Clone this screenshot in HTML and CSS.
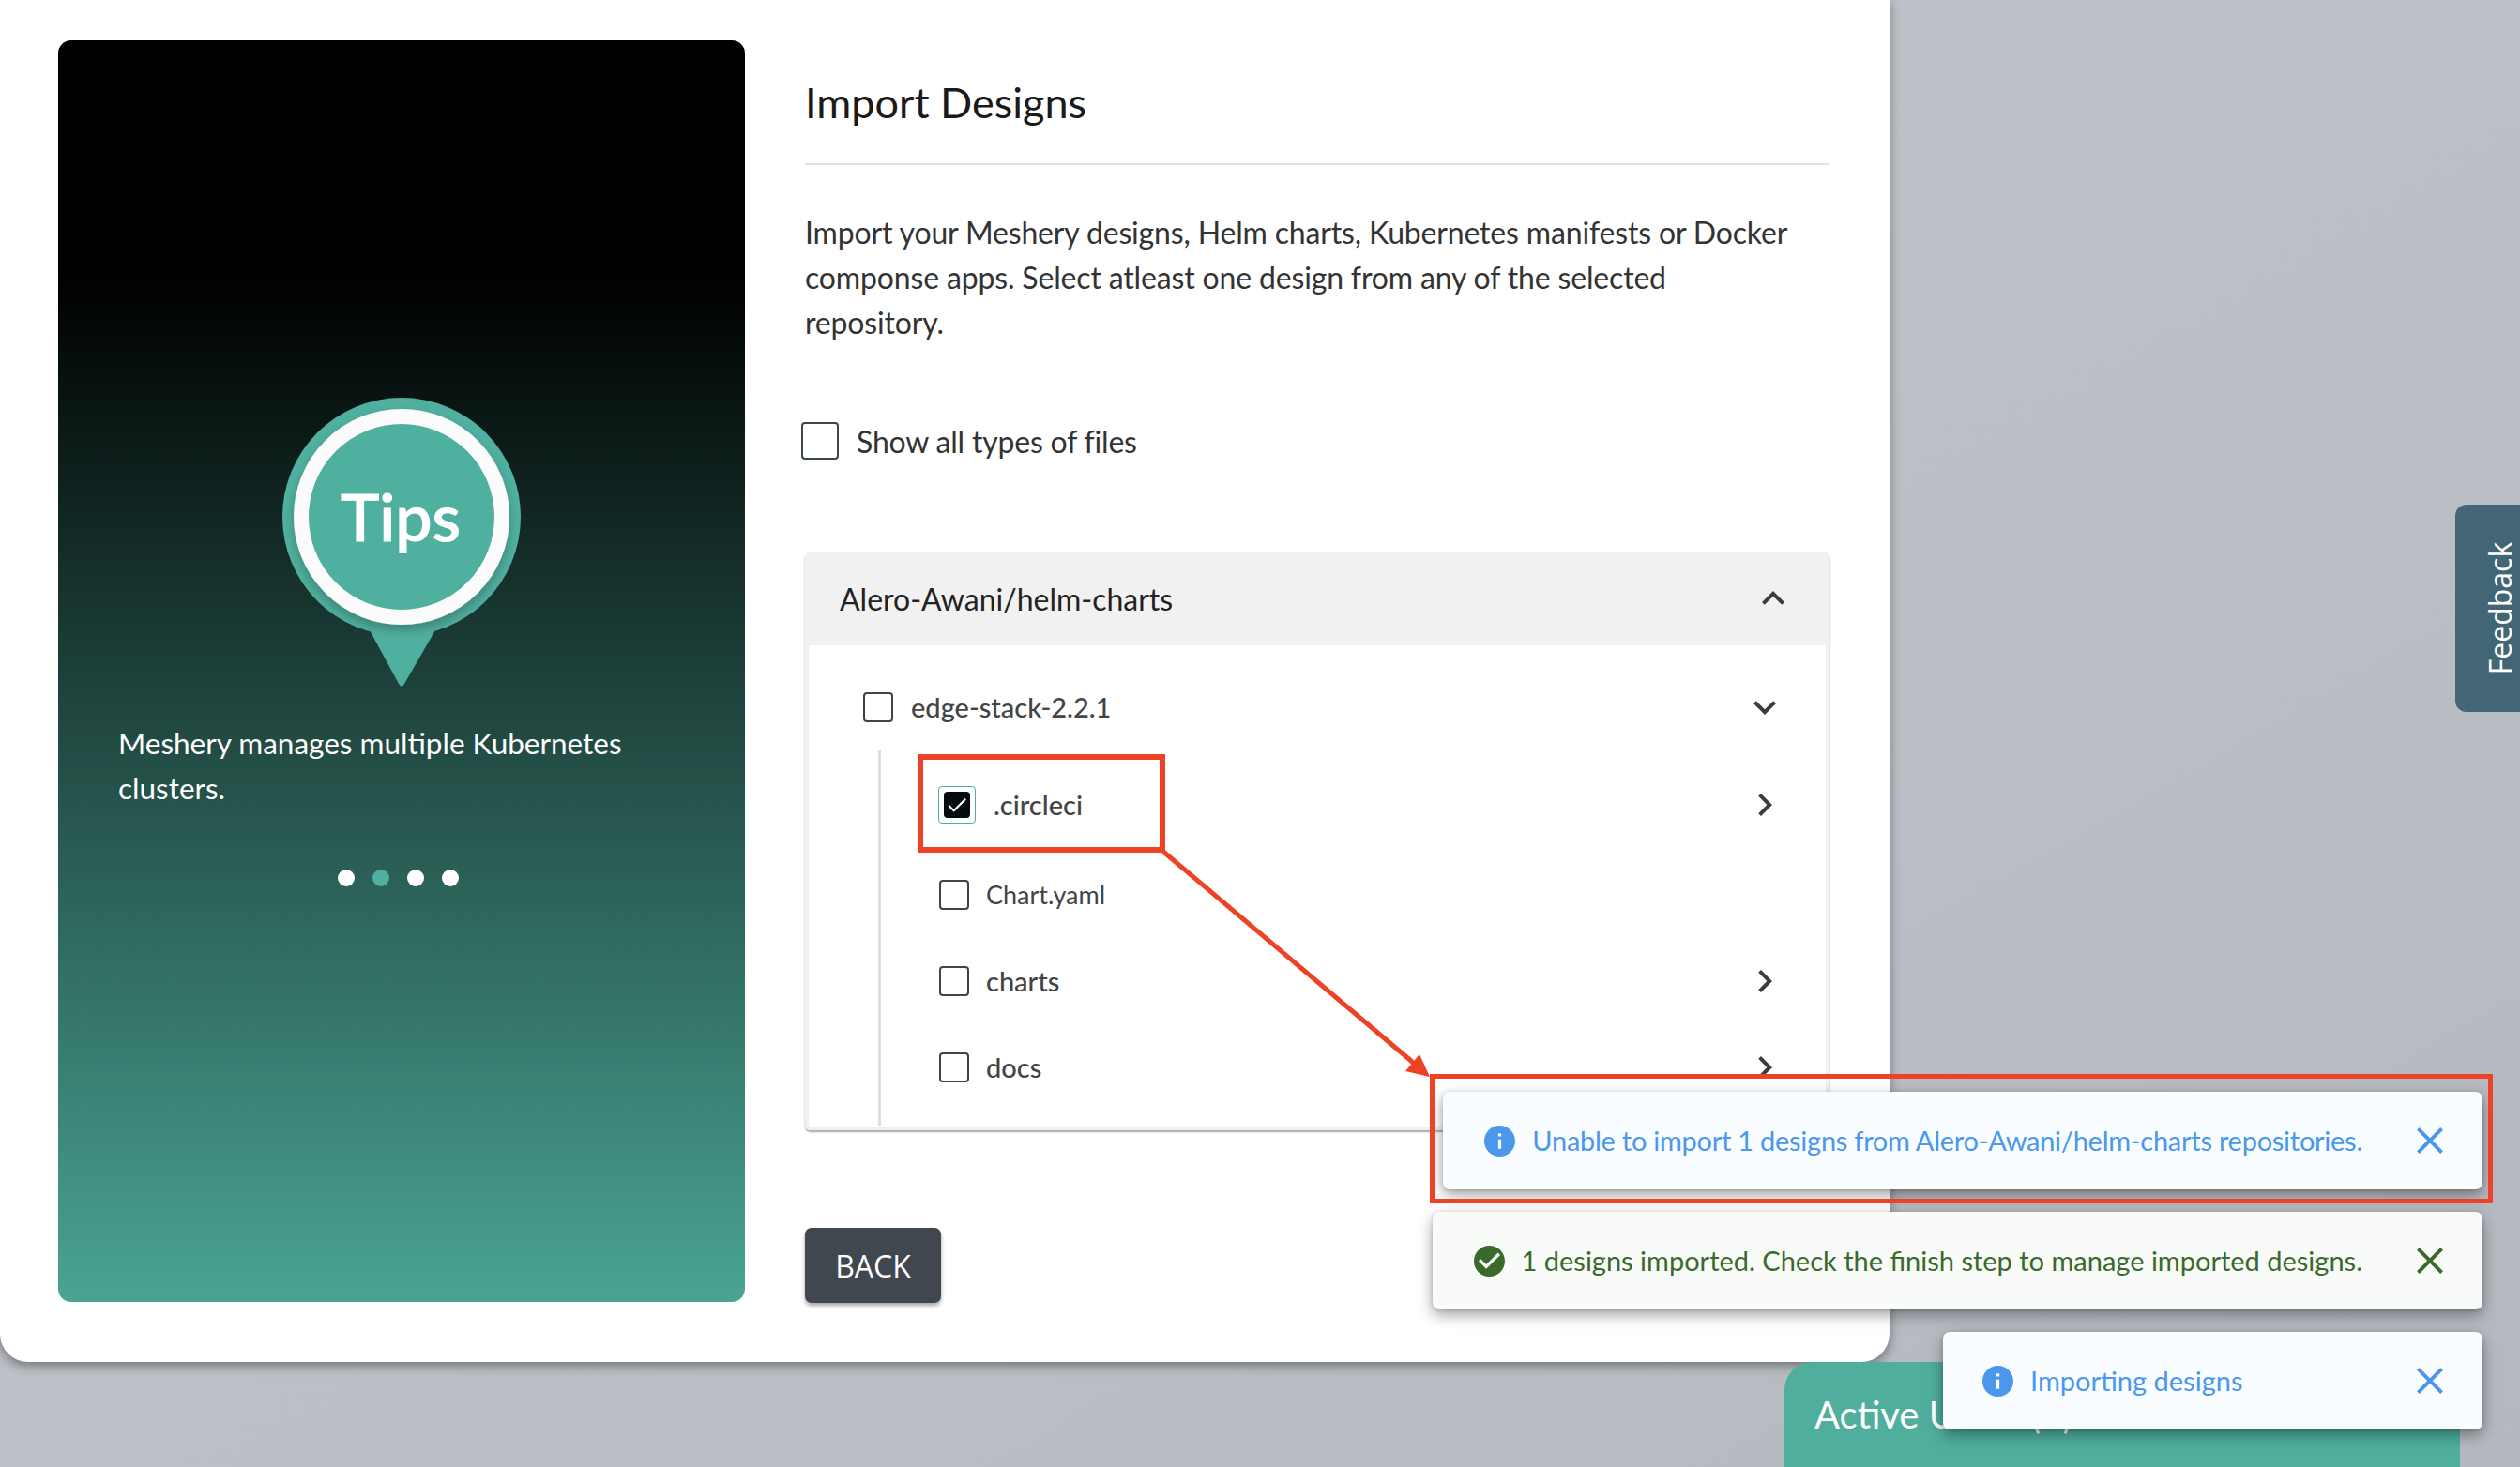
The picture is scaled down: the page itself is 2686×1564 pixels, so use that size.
FILE: index.html
```html
<!DOCTYPE html>
<html lang="en">
<head>
<meta charset="utf-8">
<title>Import Designs</title>
<link rel="stylesheet" href="styles.css">
</head>
<body>
<main class="modal">
  <aside class="tips">
    <svg class="pin" viewBox="0 0 254 310" width="254" height="310">
      <defs><filter id="ringShadow" x="-20%" y="-20%" width="140%" height="140%"><feDropShadow dx="0" dy="6" stdDeviation="6" flood-color="#000" flood-opacity=".25"/></filter></defs>
      <circle cx="127" cy="127" r="127" fill="#50b09f"/>
      <path d="M92 246 L164 246 L130 305 Q127 310 124 305 Z" fill="#50b09f"/>
      <circle cx="127" cy="127" r="107" fill="#50b09f" stroke="#fbfbfb" stroke-width="16" filter="url(#ringShadow)"/>
      <text class="pin-text" x="126" y="153" text-anchor="middle">Tips</text>
    </svg>
    <p class="tip-copy">Meshery manages multiple Kubernetes clusters.</p>
    <div class="dots"><span class="dot"></span><span class="dot dot-on"></span><span class="dot"></span><span class="dot"></span></div>
  </aside>
  <section class="content">
    <h1 class="title">Import Designs</h1>
    <p class="intro">Import your Meshery designs, Helm charts, Kubernetes manifests or Docker componse apps. Select atleast one design from any of the selected repository.</p>
    <label class="show-all"><span class="box box-lg"></span><span>Show all types of files</span></label>
    <div class="accordion">
      <div class="acc-head">
        <span>Alero-Awani/helm-charts</span>
        <svg class="chev chev-head" viewBox="0 0 24 24"><path d="M7.41 15.41 12 10.83l4.59 4.58L18 14l-6-6-6 6z"/></svg>
      </div>
      <div class="acc-body">
        <div class="row row-root">
          <span class="box"></span>
          <span class="name name-root">edge-stack-2.2.1</span>
          <svg class="chev" viewBox="0 0 24 24"><path d="M16.59 8.59 12 13.17 7.41 8.59 6 10l6 6 6-6z"/></svg>
        </div>
        <div class="children">
          <div class="row row-first">
            <span class="box-checked"><svg viewBox="0 0 24 24"><path d="M9 16.2 4.8 12l-1.4 1.4L9 19 21 7l-1.4-1.4z" transform="translate(.6 .6) scale(.95)" fill="#fff"/></svg></span>
            <span class="name name-first">.circleci</span>
            <svg class="chev" viewBox="0 0 24 24"><path d="M10 6 8.59 7.41 13.17 12l-4.58 4.59L10 18l6-6z"/></svg>
          </div>
          <div class="row">
            <span class="box"></span>
            <span class="name name-file">Chart.yaml</span>
          </div>
          <div class="row">
            <span class="box"></span>
            <span class="name">charts</span>
            <svg class="chev" viewBox="0 0 24 24"><path d="M10 6 8.59 7.41 13.17 12l-4.58 4.59L10 18l6-6z"/></svg>
          </div>
          <div class="row">
            <span class="box"></span>
            <span class="name">docs</span>
            <svg class="chev" viewBox="0 0 24 24"><path d="M10 6 8.59 7.41 13.17 12l-4.58 4.59L10 18l6-6z"/></svg>
          </div>
        </div>
      </div>
    </div>
    <button class="back" type="button">BACK</button>
  </section>
</main>
<section class="users-card">Active Users (1)</section>
<button class="feedback" type="button"><span>Feedback</span></button>
<div class="snacks">
  <div class="snack snack-info snack-tight">
    <svg class="snack-icon" viewBox="2 2 20 20"><path d="M12 2C6.48 2 2 6.48 2 12s4.48 10 10 10 10-4.48 10-10S17.52 2 12 2zm1 15h-2v-6h2v6zm0-8h-2V7h2v2z"/></svg>
    <span class="snack-text">Unable to import 1 designs from Alero-Awani/helm-charts repositories.</span>
    <svg class="snack-close" viewBox="0 0 24 24"><path d="M19 6.41 17.59 5 12 10.59 6.41 5 5 6.41 10.59 12 5 17.59 6.41 19 12 13.41 17.59 19 19 17.59 13.41 12z"/></svg>
  </div>
  <div class="snack snack-ok">
    <svg class="snack-icon" viewBox="2 2 20 20"><path d="M12 2C6.48 2 2 6.48 2 12s4.48 10 10 10 10-4.48 10-10S17.52 2 12 2zm-2 15-5-5 1.41-1.41L10 14.17l7.59-7.59L19 8l-9 9z"/></svg>
    <span class="snack-text">1 designs imported. Check the finish step to manage imported designs.</span>
    <svg class="snack-close" viewBox="0 0 24 24"><path d="M19 6.41 17.59 5 12 10.59 6.41 5 5 6.41 10.59 12 5 17.59 6.41 19 12 13.41 17.59 19 19 17.59 13.41 12z"/></svg>
  </div>
  <div class="snack snack-info snack-short">
    <svg class="snack-icon" viewBox="2 2 20 20"><path d="M12 2C6.48 2 2 6.48 2 12s4.48 10 10 10 10-4.48 10-10S17.52 2 12 2zm1 15h-2v-6h2v6zm0-8h-2V7h2v2z"/></svg>
    <span class="snack-text">Importing designs</span>
    <svg class="snack-close" viewBox="0 0 24 24"><path d="M19 6.41 17.59 5 12 10.59 6.41 5 5 6.41 10.59 12 5 17.59 6.41 19 12 13.41 17.59 19 19 17.59 13.41 12z"/></svg>
  </div>
</div>
<svg class="marks" viewBox="0 0 2686 1564" width="2686" height="1564">
  <rect x="981" y="807" width="258" height="99" fill="none" stroke="#ee4226" stroke-width="6"/>
  <rect x="1526.5" y="1147.5" width="1128" height="133" fill="none" stroke="#ee4226" stroke-width="5"/>
  <line x1="1240" y1="908" x2="1510" y2="1136" stroke="#ee4226" stroke-width="5"/>
  <path d="M1524 1148 1498 1142 1513 1124Z" fill="#ee4226"/>
</svg>
</body>
</html>
```
FILE: styles.css
```css
* { box-sizing: border-box; }
html, body { height: 100%; }
body {
  margin: 0;
  height: 1564px;
  overflow: hidden;
  position: relative;
  background: linear-gradient(150deg, #c1c5cc 0%, #bbbfc5 60%, #b4b8bf 100%);
  font-family: Lato, "Noto Sans", sans-serif;
  color: #222;
}
.modal {
  display: flex;
  width: 2014px;
  height: 1452px;
  padding: 43px 64px 0 62px;
  background: #fff;
  border-radius: 0 0 30px 30px;
  box-shadow: 0 4px 12px rgba(0, 0, 0, .4);
}
.tips {
  width: 732px;
  height: 1345px;
  flex: none;
  padding-top: 381px;
  display: flex;
  flex-direction: column;
  border-radius: 14px;
  background: linear-gradient(180deg, #000 18.5%, #4aa494 100%);
  color: #fff;
}
.pin { display: block; margin-left: 239px; flex: none; }
.pin-text { font: 500 70px Lato, sans-serif; fill: #fff; stroke: #fff; stroke-width: 1.2px; }
.tip-copy {
  margin: 34px 64px 0;
  font-size: 31.5px;
  line-height: 48px;
}
.dots { display: flex; gap: 19px; margin: 63px 0 0 298px; }
.dot { width: 18px; height: 18px; border-radius: 50%; background: #fff; }
.dot-on { background: #50b09f; }
.content { width: 1092px; margin-left: 64px; flex: none; }
.title {
  margin: 36px 0 0;
  padding-bottom: 35px;
  border-bottom: 2px solid #e2e2e2;
  font-size: 45px;
  font-weight: 400;
  line-height: 60px;
  color: #1a1a1a;
}
.intro {
  width: 1060px;
  margin: 48px 0 0;
  font-size: 32px;
  line-height: 48px;
  letter-spacing: -.16px;
  color: #333;
}
.show-all {
  display: flex;
  align-items: center;
  gap: 19px;
  margin: 82px 0 0 -4px;
  height: 40px;
  font-size: 32px;
  letter-spacing: -.2px;
  color: #333;
}
.box {
  display: block;
  flex: none;
  width: 32px;
  height: 32px;
  border: 2px solid #3a444c;
  border-radius: 4px;
  background: #fff;
}
.box-lg { width: 40px; height: 40px; }
.accordion {
  margin-top: 98px;
  border-radius: 6px;
  box-shadow: 0 2px 2px rgba(0, 0, 0, .35);
}
.acc-head {
  display: flex;
  align-items: center;
  justify-content: space-between;
  height: 100px;
  padding: 0 36px 0 37px;
  background: #f1f1f1;
  border-radius: 6px 6px 0 0;
  font-size: 32px;
  color: #222;
}
.acc-body {
  height: 517px;
  overflow: hidden;
  padding: 50px 45px 0 58px;
  border: solid #f1f1f1;
  border-width: 0 4px 4px;
  border-radius: 0 0 6px 6px;
  background: #fff;
}
.chev { width: 48px; height: 48px; margin: 0 -4px 0 auto; fill: #3c3c3c; flex: none; }
.chev-head { margin: 0; }
.row { display: flex; align-items: center; height: 92px; }
.row-root { height: 32px; gap: 19px; }
.name { font-size: 29px; font-weight: 500; color: #444; margin: 0 0 2px 18px; }
.name-root { margin-left: 0; }
.name-first { margin-left: 19px; }
.name-file { font-weight: 400; font-size: 27px; }
.children {
  margin: 30px 0 0 16px;
  padding: 8px 0 0 62px;
  border-left: 3px solid #ddd;
  height: 400px;
}
.row-first { height: 100px; margin-left: -1px; }
.box-checked {
  display: block;
  flex: none;
  width: 40px;
  height: 40px;
  padding: 5px;
  border: 1px solid #4fb09e;
  border-radius: 4px;
  background: #fff;
}
.box-checked svg { display: block; width: 100%; height: 100%; background: #050c10; border-radius: 4px; }
.back {
  display: block;
  width: 145px;
  height: 80px;
  margin-top: 104px;
  border: 0;
  border-radius: 7px;
  background: #40474f;
  color: #fff;
  font: 400 32px "Open Sans", sans-serif;
  box-shadow: 0 3px 4px rgba(0, 0, 0, .35);
}
.users-card {
  width: 720px;
  height: 112px;
  margin-left: 1902px;
  padding-left: 32px;
  border-radius: 30px 30px 0 0;
  background: #4fae9c;
  color: #fff;
  font-size: 40px;
  line-height: 112px;
}
.feedback {
  position: absolute;
  right: 0;
  top: 538px;
  width: 69px;
  height: 221px;
  padding: 0;
  border: 0;
  border-radius: 12px 0 0 12px;
  background: #436675;
  color: #fff;
  font: 400 32px "Open Sans", sans-serif;
  display: flex;
  align-items: center;
  justify-content: center;
}
.feedback span { transform: rotate(-90deg); white-space: nowrap; display: block; margin-left: 26px; }
.snacks {
  position: absolute;
  right: 40px;
  bottom: 40px;
  display: flex;
  flex-direction: column;
  align-items: flex-end;
  gap: 24px;
}
.snack {
  display: flex;
  align-items: center;
  height: 104px;
  padding: 0 40px 0 44px;
  border-radius: 7px;
  box-shadow: 0 6px 16px rgba(0, 0, 0, .36), 0 1px 4px rgba(0, 0, 0, .15);
  font-size: 29px;
}
.snack-info { background: #f9fdff; color: #4a97ec; fill: #4a97ec; }
.snack-ok { background: #f9fbf8; color: #396a2c; fill: #396a2c; }
.snack-tight { letter-spacing: -.26px; }
.snack-short { width: 575px; padding-left: 42px; }
.snack-icon { width: 33px; height: 33px; flex: none; }
.snack-text { margin: 0 0 2px 18px; white-space: nowrap; }
.snack-close { width: 48px; height: 48px; margin-left: auto; margin-right: -8px; flex: none; }
.snack:not(.snack-short) .snack-text { margin-right: 48px; }
.marks { position: absolute; left: 0; top: 0; pointer-events: none; }
```
